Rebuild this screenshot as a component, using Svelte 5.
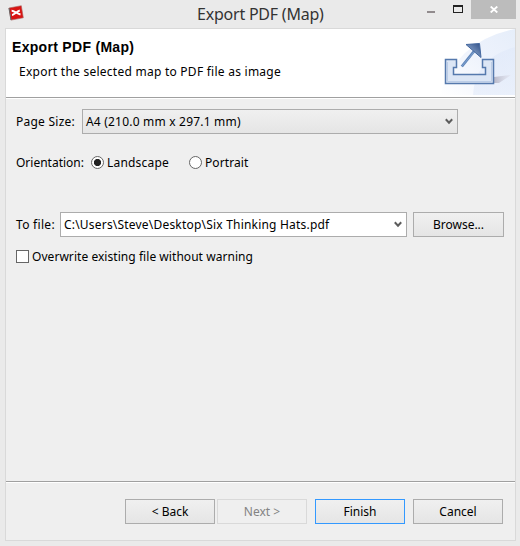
<script>
  let orientation = $state('landscape');
  let overwrite = $state(false);
</script>

{#snippet chevron()}
  <svg class="chevron" width="8" height="7" viewBox="0 0 8 7"><path d="M.8 1.300 4 4.700 7.200 1.300" fill="none" stroke="#5c5c5c" stroke-width="2" /></svg>
{/snippet}

<div class="window">
  <div class="titlebar">
    <svg class="logo" width="16" height="16" viewBox="0 0 16 16">
      <path d="M1 3 13.3.7 15.3 12.8 3 15.1Z" fill="#d91413" stroke="#a8625e" stroke-width=".6" />
      <path d="M1 3 3 15.1" stroke="#666" stroke-width="1" />
      <path d="M3.600 5.800C6 5.700 9.500 8.800 12.500 9.500M4 10C6.500 9.800 8.500 6.200 11.800 5.500" fill="none" stroke="#fff" stroke-width="1.900" />
    </svg>
    <span class="title">Export PDF (Map)</span>
    <div class="controls">
      <svg width="50" height="19" viewBox="0 0 50 19"><path d="M6 11h8v2H6z" fill="#918b8d" /><path d="M32 5h10v8H32zM33 7v5h8V7z" fill="#222" fill-rule="evenodd" /></svg>
      <div class="close"><svg width="8" height="7" viewBox="0 0 8 7"><path d="M.7.5 7.3 6.5M7.3.5.7 6.5" stroke="#fff" stroke-width="1.8" /></svg></div>
    </div>
  </div>
  <div class="frame">
    <header>
      <div class="heading">
        <h1>Export PDF (Map)</h1>
        <p>Export the selected map to PDF file as image</p>
      </div>
      <svg width="75" height="66" viewBox="0 0 75 66">
        <defs>
          <linearGradient id="swoosh" x1="0" y1="1" x2="1" y2="0"><stop offset="0" stop-color="#fff" /><stop offset=".6" stop-color="#edf2fc" /><stop offset="1" stop-color="#e6eefa" /></linearGradient>
          <linearGradient id="glow" x1="0" y1="0" x2="1" y2="1"><stop offset="0" stop-color="#dbe5f8" /><stop offset="1" stop-color="#e4ecfa" /></linearGradient>
          <linearGradient id="shade"><stop offset="0" stop-color="#b8b8c8" /><stop offset="1" stop-color="#dcdde8" stop-opacity=".4" /></linearGradient>
          <linearGradient id="arrow" x1="0" y1="1" x2="1" y2="0"><stop offset="0" stop-color="#a9c3e5" /><stop offset="1" stop-color="#304f86" /></linearGradient>
        </defs>
        <path d="M0 66Q16 12 75 0V66Z" fill="url(#swoosh)" />
        <path d="M33 66Q35 29 75 18V66Z" fill="url(#glow)" opacity=".55" />
        <path d="M54 54V48L71 46 59 54Z" fill="url(#shade)" />
        <path d="M5.500 30.500H16.500V38.500H13.500V45.500H45.500V38.500H42.500V30.500H53.500V54.500H5.500Z" fill="#dce6f5" stroke="#5579ad" stroke-width="1.500" />
        <path d="M7.500 33V52.500H51.500V33" fill="none" stroke="#bccde7" stroke-width="1" />
        <path d="M21.800 37.500 35 21" stroke="#5f85b9" stroke-width="2.800" />
        <path d="M22 37 34 23" stroke="#80a2d0" stroke-width="1" />
        <path d="M26 15.500 39.500 14.500 41 28.500Z" fill="url(#arrow)" stroke="#45689f" stroke-width="1" />
      </svg>
    </header>
    <main>
      <div class="row page"><span class="label ps">Page Size:</span><div class="combo size"><span class="a4">A4 (210.0 mm x 297.1 mm)</span>{@render chevron()}</div></div>
      <div class="row orient">
        <span class="label or">Orientation:</span>
        <label class="land"><input type="radio" value="landscape" bind:group={orientation} /><span class="la">Landscape</span></label>
        <label><input type="radio" value="portrait" bind:group={orientation} /><span class="po">Portrait</span></label>
      </div>
      <div class="row file"><span class="label tf">To file:</span><div class="combo path"><span class="pa">C:\Users\Steve\Desktop\Six Thinking Hats.pdf</span>{@render chevron()}</div><button class="browse">Browse...</button></div>
      <label class="overwrite"><input type="checkbox" bind:checked={overwrite} /><span class="ow">Overwrite existing file without warning</span></label>
    </main>
    <footer><button>&lt; Back</button><button class="next" disabled>Next &gt;</button><button class="finish">Finish</button><button class="cancel">Cancel</button></footer>
  </div>
</div>

<style>
  .window { width: 520px; height: 546px; box-sizing: border-box; background: #eaeaea; font: 12px/16px "Noto Sans", "Open Sans", sans-serif; color: #000; overflow: hidden; white-space: nowrap; }
  .window * { box-sizing: border-box; }
  svg { display: block; flex: none; }
  .titlebar { height: 28px; display: flex; align-items: flex-start; }
  .logo { margin: 5px 0 0 8px; }
  .title { flex: 1; padding: 3px 0 0 173px; font-size: 16px; line-height: 22px; letter-spacing: -.22px; color: #333; }
  .controls { display: flex; }
  .close { width: 45px; height: 19px; background: #bcbcbc; margin-right: 4px; display: flex; justify-content: center; padding-top: 6px; }
  .frame { margin-left: 5px; width: 511px; height: 513px; border: 1px solid #d9d9d9; background: #efefef; display: flex; flex-direction: column; }
  header { height: 70px; background: #fff; border-bottom: 1px solid #fff; box-shadow: inset 0 -1px #a0a0a0; display: flex; justify-content: space-between; }
  h1 { font: bold 14px/16px "Liberation Sans", Arial, sans-serif; letter-spacing: .3px; margin: 10px 0 0 6px; }
  p { margin: 9px 0 0 13px; letter-spacing: .25px; }
  main { flex: 1; padding: 10px 0 0 10px; }
  .row { display: flex; align-items: center; height: 25px; }
  .combo { height: 25px; border: 1px solid #acacac; display: flex; align-items: center; justify-content: space-between; padding: 0 4px 0 3px; }
  .size { width: 376px; background: linear-gradient(#f0f0f0, #e5e5e5); }
  .path { width: 347px; background: #fff; margin-right: 6px; }
  .ps { width: 66px; letter-spacing: .25px; }
  .or { width: 75px; }
  .tf { width: 44px; letter-spacing: .3px; }
  .a4, .pa, .la { letter-spacing: .2px; }
  .po { letter-spacing: .08px; }
  .ow { letter-spacing: .05px; }
  .orient { margin-top: 16px; }
  .land { width: 98px; }
  label { display: flex; align-items: center; }
  input { appearance: none; width: 13px; height: 13px; margin: 0 3px 0 0; border: 1px solid #666; background: #fff; flex: none; }
  input[type="radio"] { border-radius: 50%; }
  input[type="radio"]:checked { background: radial-gradient(circle, #222 3.2px, #fff 4px); }
  input[type="checkbox"]:checked { background: #333; box-shadow: inset 0 0 0 2px #fff; }
  .file { margin-top: 37px; }
  .overwrite { margin-top: 11px; height: 17px; }
  button { width: 90px; height: 25px; padding: 0; border: 1px solid #acacac; background: linear-gradient(#f0f0f0, #e5e5e5); font: inherit; color: #000; }
  .browse { width: 91px; }
  footer { height: 59px; border-top: 1px solid #a0a0a0; box-shadow: inset 0 1px #fff; padding: 17px 0 0 119px; display: flex; }
  .next { margin-left: 2px; border-color: #d9d9d9; background: #efefef; color: #838383; }
  .finish { margin-left: 8px; border-color: #3399ff; }
  .cancel { margin-left: 8px; }
</style>
